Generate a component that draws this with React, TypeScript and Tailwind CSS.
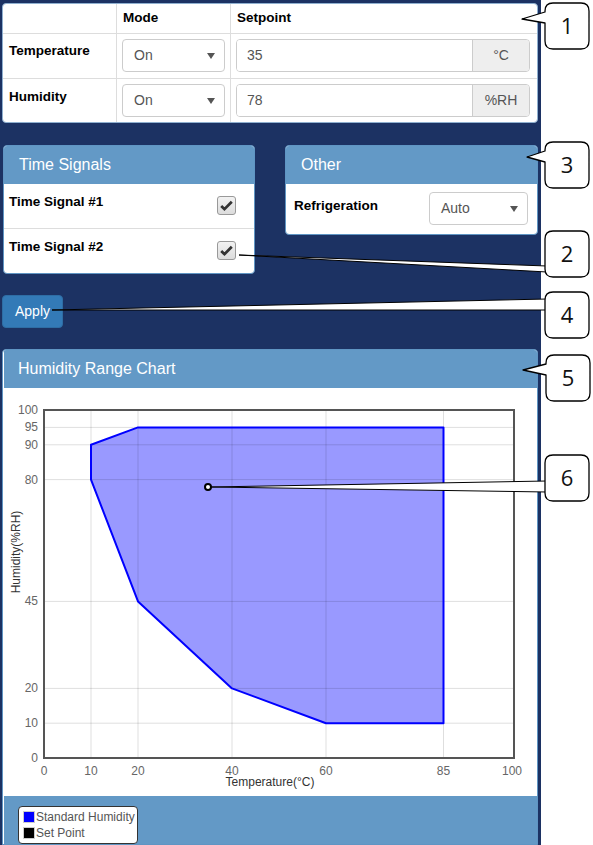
import type { ReactNode } from "react";

const font = "font-['Liberation_Sans',Arial,sans-serif]";

function Caret() {
  return (
    <svg width="8" height="6" viewBox="0 0 8 6">
      <path d="M0 0h8L4 6z" fill="#555" />
    </svg>
  );
}

function Select({ value, width }: { value: string; width: string }) {
  return (
    <div
      className={`flex h-[33px] ${width} items-center justify-between rounded border border-[#ccc] bg-white pl-[11px] pr-[9px] text-[14px] font-normal text-[#555]`}
    >
      <span>{value}</span>
      <Caret />
    </div>
  );
}

function UnitInput({ value, unit }: { value: string; unit: string }) {
  return (
    <div className="flex h-[33px] w-full overflow-hidden rounded border border-[#ccc] text-[14px] font-normal text-[#555]">
      <div className="flex flex-1 items-center bg-white pl-[10px]">{value}</div>
      <div className="flex w-[57px] items-center justify-center border-l border-[#ccc] bg-[#eee]">{unit}</div>
    </div>
  );
}

function CheckBox() {
  return (
    <div className="flex h-[19px] w-[19px] items-center justify-center rounded-[3px] border border-[#999] bg-gradient-to-b from-[#f2f2f2] to-[#dcdcdc]">
      <svg width="13" height="13" viewBox="0 0 16 16">
        <path d="M1.5 8.5l4 4L14.5 3.5" fill="none" stroke="#333" strokeWidth="3.4" strokeLinejoin="miter" />
      </svg>
    </div>
  );
}

function Panel({ title, children, className }: { title: string; children: ReactNode; className?: string }) {
  return (
    <div className={`overflow-hidden rounded border border-[#5f95c3] bg-white ${className ?? ""}`}>
      <div className="flex h-[38px] items-center bg-[#6399c6] pl-[15px] text-[16px] text-white">{title}</div>
      {children}
    </div>
  );
}

// chart geometry, in page coordinates (viewBox offset keeps them)
const X = (t: number) => 44 + t * 4.7;
const Y = (h: number) => 758 - h * 3.48;
const poly: [number, number][] = [
  [10, 90], [20, 95], [85, 95], [85, 10], [60, 10], [40, 20], [20, 45], [10, 80],
];
const xTicks = [0, 10, 20, 40, 60, 85, 100];
const yTicks = [0, 10, 20, 45, 80, 90, 95, 100];

function Chart() {
  return (
    <svg width="534" height="408" viewBox="4 388 534 408" className="block">
      <polygon
        points={poly.map(([t, h]) => `${X(t)},${Y(h)}`).join(" ")}
        fill="#9999ff"
      />
      {xTicks.slice(1, -1).map((t) => (
        <line key={t} x1={X(t)} x2={X(t)} y1={410} y2={758} stroke="rgba(0,0,0,0.13)" />
      ))}
      {yTicks.slice(1, -1).map((h) => (
        <line key={h} x1={44} x2={514} y1={Y(h)} y2={Y(h)} stroke="rgba(0,0,0,0.13)" />
      ))}
      <polygon
        points={poly.map(([t, h]) => `${X(t)},${Y(h)}`).join(" ")}
        fill="none"
        stroke="#0000ff"
        strokeWidth="2"
        strokeLinejoin="round"
      />
      <rect x={44} y={410} width={470} height={348} fill="none" stroke="#555" strokeWidth="2" />
      <g fontFamily="Liberation Sans, Arial, sans-serif" fontSize="12" fill="#666">
        {yTicks.map((h) => (
          <text key={h} x={38} y={Y(h) + 4} textAnchor="end">{h}</text>
        ))}
        {xTicks.map((t) => (
          <text key={t} x={t === 100 ? 512 : X(t)} y={775} textAnchor="middle">{t}</text>
        ))}
        <text x={270} y={786} textAnchor="middle" fill="#333">Temperature(°C)</text>
        <text x={20} y={552} textAnchor="middle" fill="#333" transform="rotate(-90 20 552)">Humidity(%RH)</text>
      </g>
      <circle cx={208} cy={487} r={3} fill="#fff" stroke="#000" strokeWidth="2" />
    </svg>
  );
}

function bubble(x: number, y: number, w: number, h: number, tTop: number, tBot: number, tipX: number, tipY: number) {
  const r = 8;
  return `M${x + r} ${y}H${x + w - r}Q${x + w} ${y} ${x + w} ${y + r}V${y + h - r}Q${x + w} ${y + h} ${x + w - r} ${y + h}H${x + r}Q${x} ${y + h} ${x} ${y + h - r}V${tBot}L${tipX} ${tipY}L${x} ${tTop}V${y + r}Q${x} ${y} ${x + r} ${y}Z`;
}

function Callouts() {
  const boxes = [
    { n: 1, x: 545, y: 3 },
    { n: 3, x: 545, y: 142 },
    { n: 2, x: 545, y: 231 },
    { n: 4, x: 545, y: 292 },
    { n: 5, x: 546, y: 355 },
    { n: 6, x: 545, y: 455 },
  ];
  const tails: Record<number, [number, number, number, number]> = {
    1: [12, 23, 522, 19],
    3: [151, 162, 527, 157],
    5: [364, 375, 523, 370],
  };
  const wedges: [number, number, number, number][] = [
    [239, 255, 266, 272],
    [52, 310, 299, 310],
    [211, 487, 481, 492],
  ];
  return (
    <svg className="pointer-events-none absolute left-0 top-0" width="593" height="845" viewBox="0 0 593 845">
      {wedges.map(([tx, ty, a, b], i) => (
        <polygon key={i} points={`${tx},${ty} 547,${a} 547,${b}`} fill="#fff" stroke="#000" strokeWidth="1" strokeLinejoin="round" />
      ))}
      {boxes.map((b) => {
        const t = tails[b.n];
        const d = t
          ? bubble(b.x, b.y, 44, 46, t[0], t[1], t[2], t[3])
          : bubble(b.x, b.y, 44, 46, b.y + 20, b.y + 20, b.x, b.y + 20);
        return (
          <g key={b.n}>
            <path d={d} fill="#fff" stroke="#000" strokeWidth="1.3" strokeLinejoin="round" />
            <text
              x={b.x + 22}
              y={b.y + 31}
              textAnchor="middle"
              fontFamily="Open Sans, Liberation Sans, sans-serif"
              fontSize="22"
              fill="#111"
            >
              {b.n}
            </text>
          </g>
        );
      })}
    </svg>
  );
}

export default function App() {
  return (
    <div className={`relative flex h-[845px] w-[593px] overflow-hidden bg-white ${font}`}>
      <div className="flex w-[541px] flex-col bg-[#1c3263] pl-[2px] pr-[3px] pt-[3px]">
        {/* Mode / setpoint table */}
        <div className="overflow-hidden rounded border border-[#8fb0d0] bg-white text-[13.5px] font-bold text-black">
          <div className="grid h-[30px] grid-cols-[114px_114px_1fr] border-b border-[#ddd]">
            <div className="border-r border-[#ddd]" />
            <div className="flex items-center border-r border-[#ddd] pl-[6px]">Mode</div>
            <div className="flex items-center pl-[6px]">Setpoint</div>
          </div>
          <div className="grid h-[45px] grid-cols-[114px_114px_1fr] border-b border-[#ddd]">
            <div className="border-r border-[#ddd] pl-[6px] pt-[7px]">Temperature</div>
            <div className="border-r border-[#ddd] px-[5px] pt-[5px]">
              <Select value="On" width="w-[103px]" />
            </div>
            <div className="pl-[5px] pr-[7px] pt-[5px]">
              <UnitInput value="35" unit="°C" />
            </div>
          </div>
          <div className="grid h-[43px] grid-cols-[114px_114px_1fr]">
            <div className="border-r border-[#ddd] pl-[6px] pt-[8px]">Humidity</div>
            <div className="border-r border-[#ddd] px-[5px] pt-[5px]">
              <Select value="On" width="w-[103px]" />
            </div>
            <div className="pl-[5px] pr-[7px] pt-[5px]">
              <UnitInput value="78" unit="%RH" />
            </div>
          </div>
        </div>

        <div className="mt-[22px] flex items-start justify-between pl-px">
          <Panel title="Time Signals" className="w-[252px]">
            {["Time Signal #1", "Time Signal #2"].map((label, i) => (
              <div
                key={label}
                className={`flex items-start justify-between pl-[5px] pr-[18px] text-[13.5px] font-bold text-black ${i === 0 ? "h-[45px] border-b border-[#ddd]" : "h-[44px]"}`}
              >
                <span className="pt-[8px]">{label}</span>
                <span className="pt-[12px]">
                  <CheckBox />
                </span>
              </div>
            ))}
          </Panel>
          <Panel title="Other" className="w-[253px]">
            <div className="flex h-[50px] items-start justify-between pl-[8px] pr-[9px] pt-[8px] text-[13.5px] font-bold text-black">
              <span className="pt-[4px]">Refrigeration</span>
              <Select value="Auto" width="w-[99px]" />
            </div>
          </Panel>
        </div>

        <div className="mt-[21px]">
          <button className="flex h-[33px] w-[61px] items-center justify-center rounded border border-[#2e6da4] bg-[#337ab7] text-[14px] text-white">
            Apply
          </button>
        </div>

        <div className="mt-[21px] flex-1 overflow-hidden rounded-t border border-[#5f95c3] bg-white pl-px">
          <div className="flex h-[38px] items-center bg-[#6399c6] pl-[14px] text-[16px] text-white">
            Humidity Range Chart
          </div>
          <Chart />
          <div className="h-[60px] bg-[#6399c6] pl-[14px] pt-[10px]">
            <div className="w-fit whitespace-nowrap rounded border border-[#333] bg-white py-[2px] pl-[4px] pr-[2px] text-[12px] leading-[16px] text-[#555]">
              <div className="flex items-center gap-px">
                <span className="h-[12px] w-[12px] border border-[#ccc] bg-[#0000ff]" />
                Standard Humidity
              </div>
              <div className="flex items-center gap-px">
                <span className="h-[12px] w-[12px] border border-[#ccc] bg-black" />
                Set Point
              </div>
            </div>
          </div>
        </div>
      </div>
      <Callouts />
    </div>
  );
}
